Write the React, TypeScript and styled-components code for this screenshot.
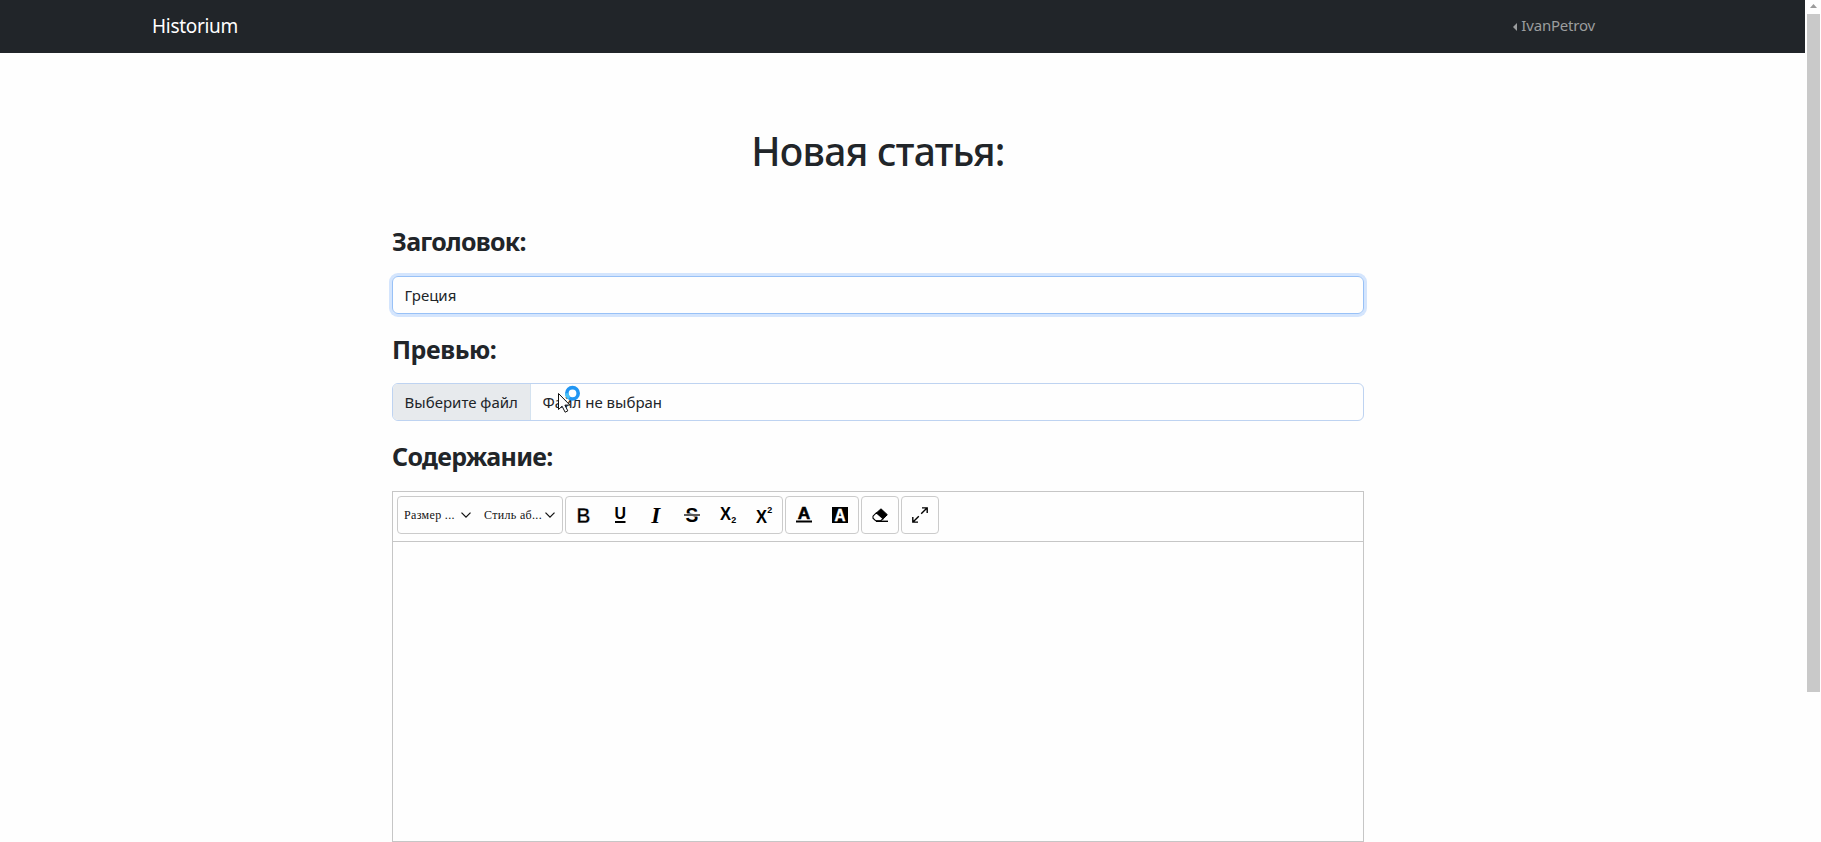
import React from 'react';
import styled, { createGlobalStyle } from 'styled-components';

const Global = createGlobalStyle`
  * { box-sizing: border-box; }
  body {
    margin: 0;
    background: #fefefe;
    color: #212529;
    font-family: "Noto Sans", "Open Sans", sans-serif;
    overflow: hidden;
  }
`;

const Page = styled.div`
  display: flex;
  height: 842px;
  overflow: hidden;
`;

const Content = styled.div`
  width: 1805px;
  flex: none;
`;

const Navbar = styled.nav`
  height: 53px;
  background: #212529;
  display: flex;
  align-items: flex-start;
  justify-content: space-between;
  padding: 0 210px 0 152px;
`;

const Brand = styled.span`
  color: #fff;
  font-size: 19px;
  line-height: 30px;
  padding-top: 11px;
  letter-spacing: -0.3px;
`;

const User = styled.span`
  color: #9b9d9e;
  display: flex;
  align-items: center;
  gap: 4px;
  font-size: 15px;
  line-height: 24px;
  padding-top: 13px;
  letter-spacing: -0.2px;
`;

const Caret = styled.svg`
  width: 4px;
  height: 8px;
  margin-top: 3px;
`;

const Form = styled.main`
  width: 972px;
  margin-left: 392px;
  padding-top: 74px;
`;

const Title = styled.h1`
  margin: 0;
  height: 48px;
  line-height: 48px;
  text-align: center;
  font-size: 39px;
  font-weight: 500;
  letter-spacing: -0.75px;
`;

const Label = styled.label<{ $top: number; $spacing?: number }>`
  display: block;
  margin-top: ${(p) => p.$top}px;
  height: 38px;
  line-height: 38px;
  font-size: 25px;
  font-weight: 700;
  letter-spacing: ${(p) => p.$spacing ?? -0.7}px;
`;

const Field = styled.div<{ $focused?: boolean; $top?: number }>`
  height: 38px;
  margin-top: ${(p) => p.$top ?? 15}px;
  display: flex;
  overflow: hidden;
  border-radius: 6px;
  border: 1px solid ${(p) => (p.$focused ? '#98c1f7' : '#bed3f1')};
  box-shadow: ${(p) => (p.$focused ? '0 0 0 3px #d4e5fd' : 'none')};
  font-size: 15px;
  line-height: 36px;
`;

const FieldText = styled.span`
  padding-left: 11.6px;
`;

const FileButton = styled.span`
  width: 138px;
  padding-left: 11.6px;
  background: #e7eaed;
  border-right: 1px solid #d4e2ef;
  white-space: nowrap;
`;

const FileArea = styled.div`
  position: relative;
`;

const Pointer = styled.svg`
  position: absolute;
  left: 165px;
  top: 1px;
  width: 24px;
  height: 30px;
`;

const Editor = styled.section`
  height: 351px;
  margin-top: 16px;
  border: 1px solid #c6c6c6;
`;

const Toolbar = styled.div`
  height: 50px;
  padding: 4px;
  display: flex;
  gap: 2px;
  border-bottom: 1px solid #c6c6c6;
`;

const Group = styled.div`
  height: 38px;
  display: flex;
  border: 1px solid #cbcbcb;
  border-radius: 4px;
`;

const Tool = styled.button`
  width: 36px;
  height: 36px;
  padding: 0;
  border: 0;
  background: none;
  display: flex;
  align-items: center;
  justify-content: center;
`;

const Icon = styled.svg`
  width: 16px;
  height: 16px;
  overflow: visible;
  font-family: "Liberation Sans", sans-serif;
  font-weight: 700;
`;

const Picker = styled.div<{ $width: number }>`
  width: ${(p) => p.$width}px;
  padding: 0 7px 0 6px;
  display: flex;
  align-items: center;
  justify-content: space-between;
  color: #111;
  font: 12px "Liberation Serif", serif;
  white-space: nowrap;
`;

const PickerText = styled.span`
  letter-spacing: 0.33px;
`;

const Chevron = styled.svg`
  width: 10px;
  height: 6px;
  flex: none;
`;

const Scrollbar = styled.aside`
  width: 16px;
  padding: 4px 1px 0 2px;
`;

const ScrollArrow = styled.svg`
  display: block;
  width: 7px;
  height: 4px;
  margin: 0 0 6px 3px;
`;

const Thumb = styled.div`
  height: 678px;
  background: #c9c9c9;
`;

function Dropdown({ text, width }: { text: string; width: number }) {
  return (
    <Picker $width={width}>
      <PickerText>{text}</PickerText>
      <Chevron viewBox="0 0 10 6">
        <path d="M.5.6 5 5.1 9.5.6" fill="none" stroke="#111" strokeWidth="1.25" />
      </Chevron>
    </Picker>
  );
}

function ToolIcon({ children }: { children: React.ReactNode }) {
  return (
    <Tool type="button">
      <Icon viewBox="0 0 16 16">{children}</Icon>
    </Tool>
  );
}

export default function App() {
  return (
    <>
      <Global />
      <Page>
        <Content>
          <Navbar>
            <Brand>Historium</Brand>
            <User>
              <Caret viewBox="0 0 4 8"><path d="M4 0v8L0 4z" fill="currentColor" /></Caret>
              IvanPetrov
            </User>
          </Navbar>
          <Form>
            <Title>Новая статья:</Title>
            <Label $top={47}>Заголовок:</Label>
            <Field $focused $top={16}><FieldText>Греция</FieldText></Field>
            <Label $top={16} $spacing={-0.45}>Превью:</Label>
            <FileArea>
              <Field>
                <FileButton>Выберите файл</FileButton>
                <FieldText>Файл не выбран</FieldText>
              </Field>
              <Pointer viewBox="0 0 24 30">
                <path d="M1.5 9.5v16l3.6-3.3 3 6 2.7-1.3-2.9-5.8h5z" fill="#fff" stroke="#111" strokeWidth="1" />
                <circle cx="15.5" cy="9.3" r="5.7" fill="#fff" stroke="#2196f3" strokeWidth="3.6" />
                <path d="M9.8 9.3a5.7 5.7 0 0 0 2.5 4.7" fill="none" stroke="#4cc2f8" strokeWidth="3.6" />
              </Pointer>
            </FileArea>
            <Label $top={16}>Содержание:</Label>
            <Editor>
              <Toolbar>
                <Group>
                  <Dropdown text="Размер ..." width={80} />
                  <Dropdown text="Стиль аб..." width={84} />
                </Group>
                <Group>
                  <ToolIcon><text x="0.6" y="15.5" fontSize="21.5" textLength="14" lengthAdjust="spacingAndGlyphs" stroke="#fefefe" strokeWidth="0.4">B</text></ToolIcon>
                  <ToolIcon>
                    <text x="2.4" y="11.6" fontSize="16" textLength="11.5" lengthAdjust="spacingAndGlyphs">U</text>
                    <path d="M3 14h10.5v2H3z" />
                  </ToolIcon>
                  <ToolIcon><text x="3.3" y="15.5" fontSize="23" fontFamily="Liberation Serif" fontStyle="italic">I</text></ToolIcon>
                  <ToolIcon>
                    <text x="1.5" y="15.4" fontSize="21" textLength="12.8" lengthAdjust="spacingAndGlyphs">S</text>
                    <path d="M0 6.5h16v3H0z" fill="#fefefe" />
                    <path d="M0 7.2h16v1.6H0z" fill="#333" />
                  </ToolIcon>
                  <ToolIcon>
                    <text x="0" y="13" fontSize="18.5" textLength="11" lengthAdjust="spacingAndGlyphs">X</text>
                    <text x="11.2" y="15.5" fontSize="9">2</text>
                  </ToolIcon>
                  <ToolIcon>
                    <text x="0" y="16" fontSize="18.5" textLength="11" lengthAdjust="spacingAndGlyphs">X</text>
                    <text x="11.2" y="6.2" fontSize="9">2</text>
                  </ToolIcon>
                </Group>
                <Group>
                  <ToolIcon>
                    <text x="1.8" y="12" fontSize="17" textLength="12.4" lengthAdjust="spacingAndGlyphs" stroke="#000" strokeWidth="0.6">A</text>
                    <path d="M0 13.5h16v2H0z" />
                  </ToolIcon>
                  <ToolIcon>
                    <path d="M0 0h16v16H0z" />
                    <text x="2.5" y="13.8" fontSize="16.5" fill="#fff" textLength="11" lengthAdjust="spacingAndGlyphs" stroke="#fff" strokeWidth="0.4">A</text>
                  </ToolIcon>
                </Group>
                <Group>
                  <ToolIcon>
                    <path d="M9 1.8 15.3 7.7l-4 4.1-6.7-6z" stroke="#000" />
                    <path d="M4.3 5.8 1 9.2v2l2.6 2.5h5.2l2.2-2L4.3 5.8Z" fill="#fff" stroke="#000" strokeWidth="1.1" />
                    <path d="M4 13.6h12v1.4H4z" />
                  </ToolIcon>
                </Group>
                <Group>
                  <ToolIcon>
                    <path d="M10 .9h5.2V6M15 1 9.2 6.8M6 15.1H.8V10M1 15l5.8-5.8" fill="none" stroke="#000" strokeWidth="1.4" />
                  </ToolIcon>
                </Group>
              </Toolbar>
            </Editor>
          </Form>
        </Content>
        <Scrollbar>
          <ScrollArrow viewBox="0 0 7 4"><path d="M0 4 3.5 0 7 4z" fill="#9b9b9b" /></ScrollArrow>
          <Thumb />
        </Scrollbar>
      </Page>
    </>
  );
}
